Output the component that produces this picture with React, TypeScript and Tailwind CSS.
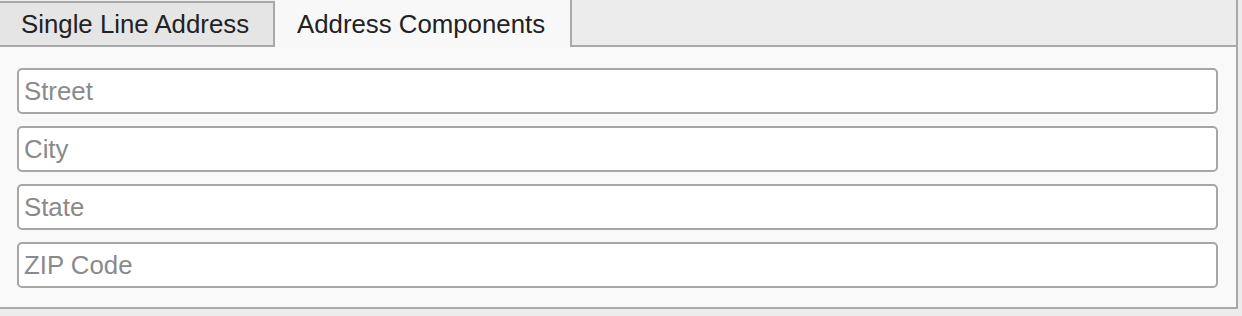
import React from "react";

export default function App() {
  const fields = ["Street", "City", "State", "ZIP Code"];
  return (
    <div
      className="w-[1242px] h-[316px] overflow-hidden bg-[#ececec]"
      style={{ fontFamily: '"Liberation Sans", Arial, Helvetica, sans-serif' }}
    >
      <div className="flex h-[47px] w-[1238px]">
        <div className="self-end h-[46px] w-[275px] border-t-2 border-r-2 border-b-2 border-[#a9a9a9] bg-[#e5e5e5] flex items-center pl-[21px] pt-[1px] text-[25.8px] text-[#222]">
          Single Line Address
        </div>
        <div className="h-full w-[297px] border-r-2 border-[#a9a9a9] bg-[#f8f8f8] flex items-center pl-[22px] pt-[1px] text-[25.8px] text-[#222]">
          Address Components
        </div>
        <div className="flex-1 h-full border-b-2 border-r-2 border-[#a9a9a9] bg-[#ececec]" />
      </div>
      <div className="w-[1238px] h-[262px] bg-[#f9f9f9] border-r-2 border-b-2 border-[#a9a9a9] pt-[21px] pl-[17px] pr-[18px] flex flex-col gap-[12px]">
        {fields.map((f) => (
          <input
            key={f}
            type="text"
            placeholder={f}
            className="h-[46px] w-full rounded-[5px] border-2 border-[#a6a6a6] bg-white px-[5px] text-[25.8px] text-[#222] placeholder:text-[#8a8a8a] outline-none"
          />
        ))}
      </div>
    </div>
  );
}
